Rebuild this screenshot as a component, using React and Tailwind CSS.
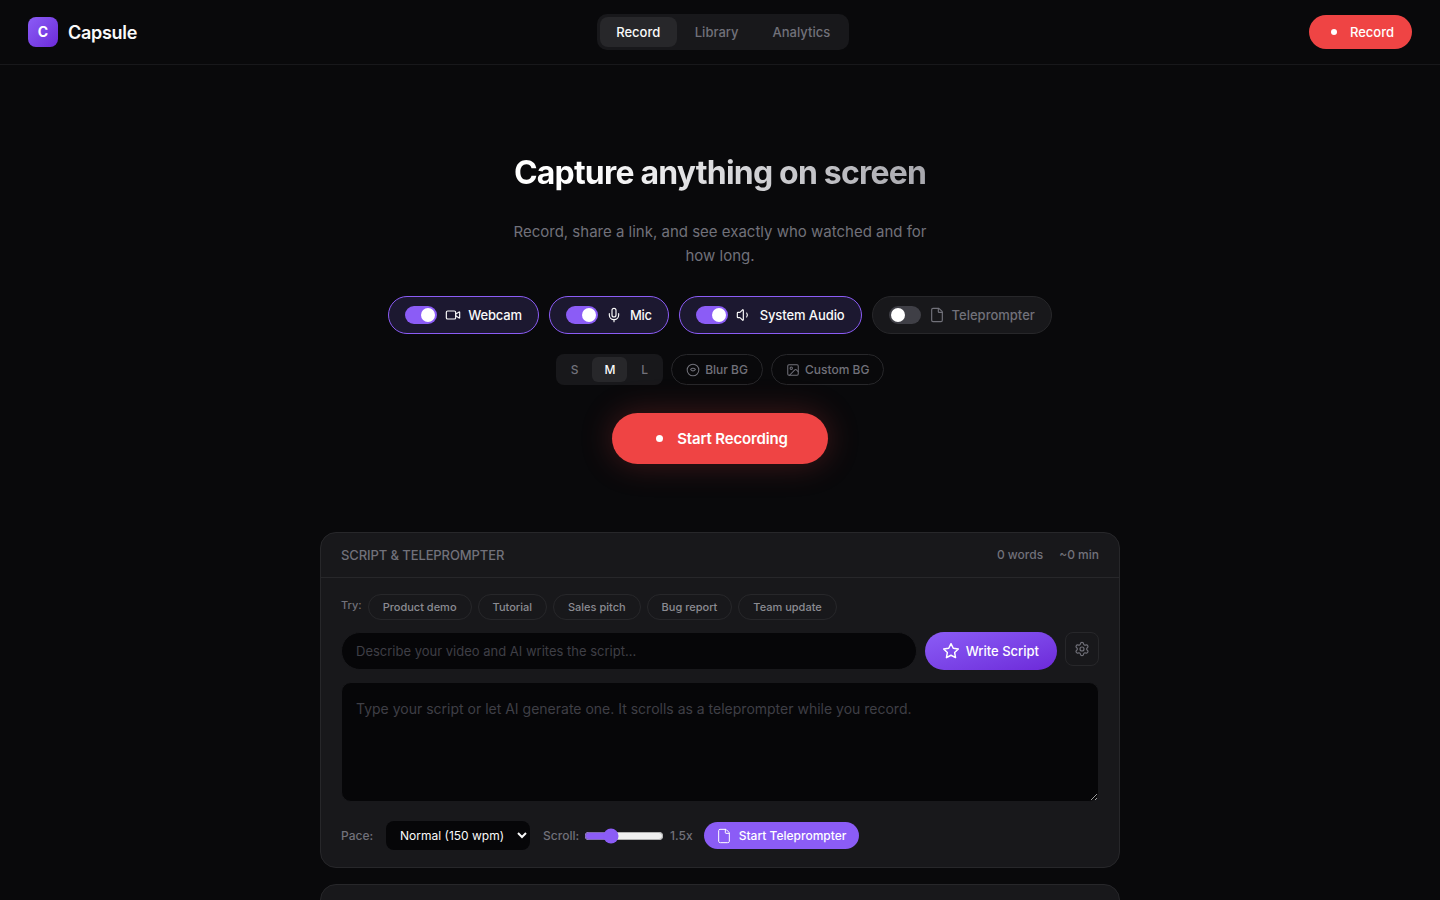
import React, { useState } from "react";
import { Video, Mic, Volume1, File, Image, Settings } from "lucide-react";

const Toggle = ({ on }) => (
  <span className={`relative w-8 h-[18px] rounded-full shrink-0 ${on ? "bg-[#8b5cf6]" : "bg-[#3f3f46]"}`}>
    <span className={`absolute top-[2px] w-[14px] h-[14px] rounded-full bg-white ${on ? "left-4" : "left-[2px]"}`} />
  </span>
);

const TogglePill = ({ on, icon: Icon, label, gap = "ml-[7px]", track = "" }) => (
  <button
    className={`h-[38px] flex items-center px-4 rounded-full border text-[13px] font-medium ${
      on ? "bg-[#1c1830] border-[#8b5cf6] text-[#fafafa]" : "bg-[#18181b] border-[#27272a] text-[#71717a]"
    }`}
  >
    <Toggle on={on} />
    <Icon size={16} strokeWidth={1.75} className="ml-2" />
    <span className={`${gap} ${track}`}>{label}</span>
  </button>
);

const SmallPill = ({ children }) => (
  <button className="h-[31px] flex items-center gap-[5px] px-[14px] rounded-full border border-[#27272a] text-[12px] font-medium text-[#71717a]">
    {children}
  </button>
);

const Suggestion = ({ label }) => (
  <button className="h-[26px] px-[14px] rounded-full border border-[#27272a] text-[11px] leading-[1.5] font-medium text-[#8b8b92]">
    {label}
  </button>
);

export default function App() {
  const [tab, setTab] = useState("Record");
  const [size, setSize] = useState("M");
  const [speed, setSpeed] = useState(1.5);

  return (
    <div className="h-screen overflow-hidden bg-[#09090b] text-[#fafafa] font-['Inter',sans-serif] leading-[1.6] antialiased [text-rendering:optimizeLegibility]">
      <header className="h-[65px] flex items-center justify-between px-7 border-b border-[#18181b]">
        <div className="flex items-center gap-[10px]">
          <div className="w-[30px] h-[30px] rounded-lg bg-gradient-to-br from-[#8b5cf6] to-[#6d28d9] flex items-center justify-center text-[14px] font-bold text-white">
            C
          </div>
          <span className="pt-[2px] text-[18px] font-semibold tracking-[-0.3px]">Capsule</span>
        </div>
        <nav className="flex gap-[2px] p-[3px] rounded-[10px] bg-[#18181b]">
          {["Record", "Library", "Analytics"].map((t) => (
            <button
              key={t}
              onClick={() => setTab(t)}
              className={`h-[30px] rounded-lg text-[13px] font-medium ${t === "Record" ? "w-[77px]" : "px-4"} ${
                tab === t ? "bg-[#27272a] text-[#fafafa]" : "text-[#71717a]"
              }`}
            >
              {t}
            </button>
          ))}
        </nav>
        <button className="h-[34px] flex items-center gap-[9px] px-[18px] rounded-full bg-[#ef4444] text-[13px] font-medium text-white">
          <span className="w-[14px] flex justify-center">
            <span className="w-[6px] h-[6px] rounded-full bg-white" />
          </span>
          Record
        </button>
      </header>

      <main className="w-[800px] mx-auto">
        <section className="pt-[88px] flex flex-col items-center">
          <h1 className="text-[32px] leading-[40px] font-bold tracking-[-0.8px] bg-gradient-to-r from-white from-[15%] to-[#a8a8ae] bg-clip-text text-transparent">
            Capture anything on screen
          </h1>
          <p className="mt-[27px] w-[440px] text-[15px] text-[#71717a] text-center">
            Record, share a link, and see exactly who watched and for how long.
          </p>
          <div className="mt-7 flex gap-[10px]">
            <TogglePill on icon={Video} label="Webcam" track="tracking-[-0.15px]" />
            <TogglePill on icon={Mic} label="Mic" gap="ml-2" track="tracking-[-0.3px]" />
            <TogglePill on icon={Volume1} label="System Audio" gap="ml-2" track="tracking-[-0.09px]" />
            <TogglePill icon={File} label="Teleprompter" />
          </div>
          <div className="mt-5 flex gap-2">
            <div className="h-[31px] flex items-center gap-[2px] p-[3px] rounded-lg bg-[#18181b]">
              {["S", "M", "L"].map((s) => (
                <button
                  key={s}
                  onClick={() => setSize(s)}
                  className={`h-[25px] px-[12px] rounded-md text-[12px] font-medium ${
                    size === s ? "bg-[#27272a] text-[#fafafa]" : "text-[#71717a]"
                  }`}
                >
                  {s}
                </button>
              ))}
            </div>
            <SmallPill>
              <svg width="14" height="14" viewBox="0 0 24 24" fill="none" stroke="currentColor" strokeWidth="1.75">
                <circle cx="12" cy="12" r="10" />
                <path d="M8 11c1 -1.2 2.4 -2 4 -2s3 .8 4 2c-1 1.6 -2.400 2.500 -4 2.500s-3 -.9 -4 -2.500z" />
              </svg>
              Blur BG
            </SmallPill>
            <SmallPill>
              <Image size={14} strokeWidth={1.75} />
              Custom BG
            </SmallPill>
          </div>
          <button className="mt-7 h-[51px] flex items-center gap-[10px] px-10 rounded-full bg-[#ef4444] text-[15px] font-semibold tracking-[-0.15px] text-white shadow-[0_0_32px_rgba(239,68,68,0.25)]">
            <span className="w-[15px] flex justify-center">
              <span className="w-[7px] h-[7px] rounded-full bg-white" />
            </span>
            Start Recording
          </button>
        </section>

        <section className="mt-[68px] h-[336px] rounded-2xl border border-[#27272a] bg-[#18181b]">
          <div className="h-[45px] flex items-center justify-between px-5 border-b border-[#27272a]">
            <span className="text-[13px] font-medium tracking-[-0.1px] text-[#71717a] uppercase">Script &amp; Teleprompter</span>
            <div className="flex gap-4 text-[12px] font-medium text-[#71717a]">
              <span>0 words</span>
              <span>~0 min</span>
            </div>
          </div>
          <div className="px-5 pt-4">
            <div className="flex items-center gap-[6px]">
              <span className="text-[11px] font-medium text-[#71717a] -translate-y-[1px]">Try:</span>
              {["Product demo", "Tutorial", "Sales pitch", "Bug report", "Team update"].map((s) => (
                <Suggestion key={s} label={s} />
              ))}
            </div>
            <div className="mt-3 flex items-start gap-2">
              <input
                placeholder="Describe your video and AI writes the script..."
                className="flex-1 h-[38px] px-[14px] rounded-[19px] border border-[#18181b] bg-[#060608] text-[13px] outline-none placeholder:text-[#3f3f46]"
              />
              <button className="h-[38px] flex items-center gap-[7px] px-[18px] rounded-full bg-gradient-to-br from-[#8b5cf6] to-[#6d28d9] text-[13px] font-medium text-white">
                <svg width="16" height="16" viewBox="0 0 24 24" fill="none" stroke="currentColor" strokeWidth="2" strokeLinejoin="round" className="scale-110">
                  <polygon points="12 2 15.09 8.26 22 9.27 17 14.14 18.18 21.02 12 17.77 5.82 21.02 7 14.14 2 9.27 8.91 8.26 12 2" />
                </svg>
                Write Script
              </button>
              <button className="w-[34px] h-[34px] flex items-center justify-center rounded-lg border border-[#27272a] text-[#71717a]">
                <Settings size={16} strokeWidth={1.75} />
              </button>
            </div>
            <textarea
              placeholder="Type your script or let AI generate one. It scrolls as a teleprompter while you record."
              className="mt-3 block w-full h-[120px] p-[14px] rounded-[10px] border border-[#18181b] bg-[#060608] text-[14px] leading-[24px] outline-none placeholder:text-[#3f3f46]"
            />
            <div className="mt-[19px] flex items-center text-[12px] font-medium text-[#71717a]">
              <span>Pace:</span>
              <select className="ml-[13px] w-[144px] h-[29px] pl-[10px] rounded-lg bg-[#060608] text-[#fafafa] text-[12px] font-normal outline-none [color-scheme:dark]">
                <option>Normal (150 wpm)</option>
              </select>
              <span className="ml-[13px]">Scroll:</span>
              <input
                type="range"
                min="0"
                max="5"
                step="0.5"
                value={speed}
                onChange={(e) => setSpeed(Number(e.target.value))}
                className="ml-[5px] w-20 accent-[#8b5cf6]"
              />
              <span className="ml-[6px]">{speed}x</span>
              <button className="ml-[11px] h-[27px] flex items-center gap-[7px] pl-3 pr-[13px] rounded-full bg-[#8b5cf6] text-[12px] font-medium text-white">
                <File size={16} strokeWidth={1.5} />
                Start Teleprompter
              </button>
            </div>
          </div>
        </section>

        <section className="mt-4 h-[100px] rounded-2xl border border-[#27272a] bg-[#18181b]" />
      </main>
    </div>
  );
}
